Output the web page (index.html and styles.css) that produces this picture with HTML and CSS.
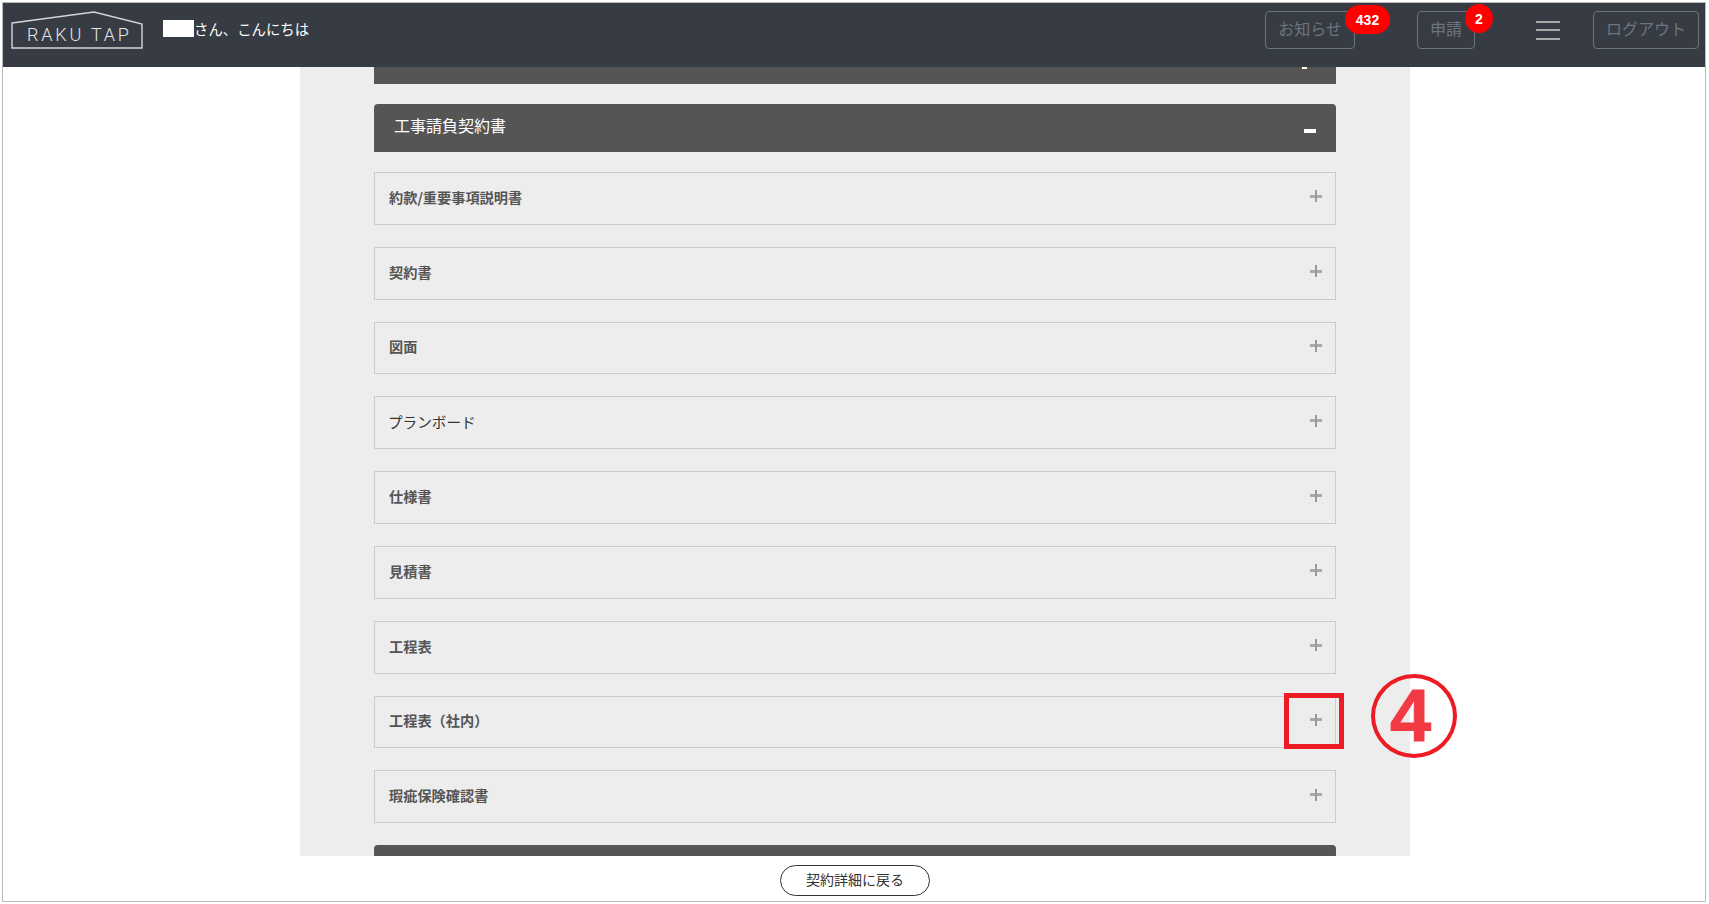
FILE: index.html
```html
<!DOCTYPE html>
<html lang="ja">
<head>
    <meta charset="UTF-8">
    <meta name="viewport" content="width=device-width, initial-scale=1.0">
    <title>RAKU TAP</title>
    <link rel="stylesheet" href="styles.css">
</head>
<body>
    <div class="frame">
        <header class="topbar">
            <svg class="logo" width="132" height="38" viewBox="0 0 132 38">
                <path class="logo-house" d="M1 12 L83 1 L131 13 V37 H1 Z"/>
                <text class="logo-text" x="16" y="30">RAKU TAP</text>
            </svg>
            <div class="greeting"><span class="name-mask"></span>さん、こんにちは</div>
            <div class="topbar-right">
                <a class="nav-btn btn-news">お知らせ<span class="badge badge-news">432</span></a>
                <a class="nav-btn btn-apply">申請<span class="badge badge-apply">2</span></a>
                <div class="hamburger"><span></span><span></span><span></span></div>
                <a class="nav-btn btn-logout">ログアウト</a>
            </div>
        </header>

        <main class="content">
            <div class="column">
                <div class="section-stub"><span class="stub-minus"></span></div>

                <div class="section-head">
                    <span>工事請負契約書</span>
                    <span class="minus"></span>
                </div>

                <div class="doc-row"><span>約款/重要事項説明書</span><span class="plus"></span></div>
                <div class="doc-row"><span>契約書</span><span class="plus"></span></div>
                <div class="doc-row"><span>図面</span><span class="plus"></span></div>
                <div class="doc-row"><span class="plain">プランボード</span><span class="plus"></span></div>
                <div class="doc-row"><span>仕様書</span><span class="plus"></span></div>
                <div class="doc-row"><span>見積書</span><span class="plus"></span></div>
                <div class="doc-row"><span>工程表</span><span class="plus"></span></div>
                <div class="doc-row"><span>工程表（社内）</span><span class="plus"></span></div>
                <div class="doc-row"><span>瑕疵保険確認書</span><span class="plus"></span></div>

                <div class="section-next"></div>
            </div>
        </main>

        <footer class="bottom">
            <a class="back-btn">契約詳細に戻る</a>
        </footer>

        <!-- annotation drawn over the screen -->
        <div class="mark-box"></div>
        <div class="mark-circle">4</div>
    </div>
</body>
</html>
```

FILE: styles.css
```css
html, body {
    margin: 0;
    padding: 0;
    background-color: white;
}
body {
    font-family: "Noto Sans CJK JP", "Noto Sans", sans-serif;
    color: #444;
    overflow: hidden;
}
.frame {
    position: relative;
    box-sizing: border-box;
    width: 1704px;
    height: 900px;
    margin: 2px 0 0 2px;
    border: 1px solid #bbb;
    display: flex;
    flex-direction: column;
}
.topbar {
    flex: none;
    box-sizing: border-box;
    height: 64px;
    background-color: #373b43;
    display: flex;
    align-items: center;
    padding: 0 6px 10px 8px;
}
.logo {
    flex: none;
    display: block;
}
.logo-house {
    fill: none;
    stroke: #d5d6d8;
    stroke-width: 1.4;
}
.logo-text {
    font-family: "Roboto", sans-serif;
    font-size: 18px;
    font-weight: 300;
    letter-spacing: 2.8px;
    fill: #e4e5e6;
}
.greeting {
    display: flex;
    align-items: center;
    margin: -3px 0 0 20px;
    font-size: 14.4px;
    color: white;
}
.name-mask {
    width: 31px;
    height: 17px;
    background-color: white;
}
.topbar-right {
    margin-left: auto;
    display: flex;
    align-items: center;
}
.nav-btn {
    position: relative;
    box-sizing: border-box;
    height: 38px;
    padding-bottom: 4px;
    display: flex;
    align-items: center;
    justify-content: center;
    border: 1px solid #6c757d;
    border-radius: 4px;
    font-size: 16px;
    color: #6c757d;
}
.btn-news {
    width: 90px;
}
.btn-apply {
    width: 58px;
    margin-left: 62px;
}
.btn-logout {
    width: 106px;
    margin-left: 33px;
}
.badge {
    position: absolute;
    display: flex;
    align-items: center;
    justify-content: center;
    background-color: #f00;
    color: white;
    font-family: "Liberation Sans", sans-serif;
    font-size: 14px;
    font-weight: bold;
}
.badge-news {
    left: 79px;
    top: -7px;
    width: 45px;
    height: 29px;
    border-radius: 15px;
}
.badge-apply {
    left: 47px;
    top: -8px;
    width: 28px;
    height: 29px;
    border-radius: 50%;
}
.hamburger {
    width: 24px;
    height: 19px;
    margin-left: 61px;
    display: flex;
    flex-direction: column;
    justify-content: space-between;
}
.hamburger span {
    display: block;
    height: 2px;
    background-color: #aaa;
}
.content {
    flex: 1;
    min-height: 0;
    overflow: hidden;
    padding-left: 2px;
}
.column {
    box-sizing: border-box;
    width: 1110px;
    margin: 0 auto;
    padding: 0 74px;
    height: 100%;
    background-color: #ededed;
}
.section-stub {
    height: 17px;
    margin-bottom: 20px;
    background-color: #555;
    position: relative;
}
.stub-minus {
    position: absolute;
    right: 29px;
    top: 0;
    width: 5px;
    height: 2px;
    background-color: #fffbe0;
}
.section-head {
    box-sizing: border-box;
    height: 48px;
    margin-bottom: 20px;
    padding: 0 20px 6px 20px;
    display: flex;
    align-items: center;
    justify-content: space-between;
    background-color: #555;
    border-radius: 4px 4px 0 0;
    color: white;
    font-size: 16px;
}
.minus {
    width: 12px;
    height: 4px;
    margin-top: 11px;
    background-color: white;
}
.doc-row {
    box-sizing: border-box;
    height: 52.8px;
    margin-bottom: 22px;
    padding: 0 13px 0 14px;
    display: flex;
    align-items: center;
    justify-content: space-between;
    border: 1px solid #ccc;
    background-color: #ededed;
    font-size: 14.2px;
    font-weight: 700;
    color: #555;
}
.doc-row > span:first-child {
    margin-top: -3px;
}
.doc-row .plain {
    margin-left: -1px;
    font-size: 14.6px;
    font-weight: 400;
    color: #333;
}
.plus {
    width: 12px;
    height: 12px;
    margin-top: -4px;
    background: linear-gradient(#999, #999) center / 2px 12px no-repeat,
        linear-gradient(#aaa, #aaa) center / 12px 3px no-repeat;
}
.section-next {
    height: 40px;
    background-color: #555;
    border-radius: 4px 4px 0 0;
}
.bottom {
    flex: none;
    height: 45px;
    display: flex;
    align-items: flex-start;
    justify-content: center;
    padding-left: 2px;
    background-color: white;
}
.back-btn {
    box-sizing: border-box;
    width: 150px;
    height: 31px;
    margin-top: 9px;
    padding-bottom: 3px;
    display: flex;
    align-items: center;
    justify-content: center;
    border: 1px solid #333;
    border-radius: 16px;
    font-size: 14px;
    color: #333;
}
.mark-box {
    position: absolute;
    left: 1281px;
    top: 690px;
    box-sizing: border-box;
    width: 60px;
    height: 56px;
    border: 5px solid #ed1c24;
}
.mark-circle {
    position: absolute;
    left: 1368px;
    top: 671px;
    box-sizing: border-box;
    width: 86px;
    height: 84px;
    padding-right: 7px;
    border: 4px solid #ed1c24;
    border-radius: 50%;
    display: flex;
    align-items: center;
    justify-content: center;
    font-family: "Liberation Sans", sans-serif;
    font-size: 74px;
    font-weight: bold;
    line-height: 1;
    color: #f23a45;
    -webkit-text-stroke: 1px #f23a45;
}
```
